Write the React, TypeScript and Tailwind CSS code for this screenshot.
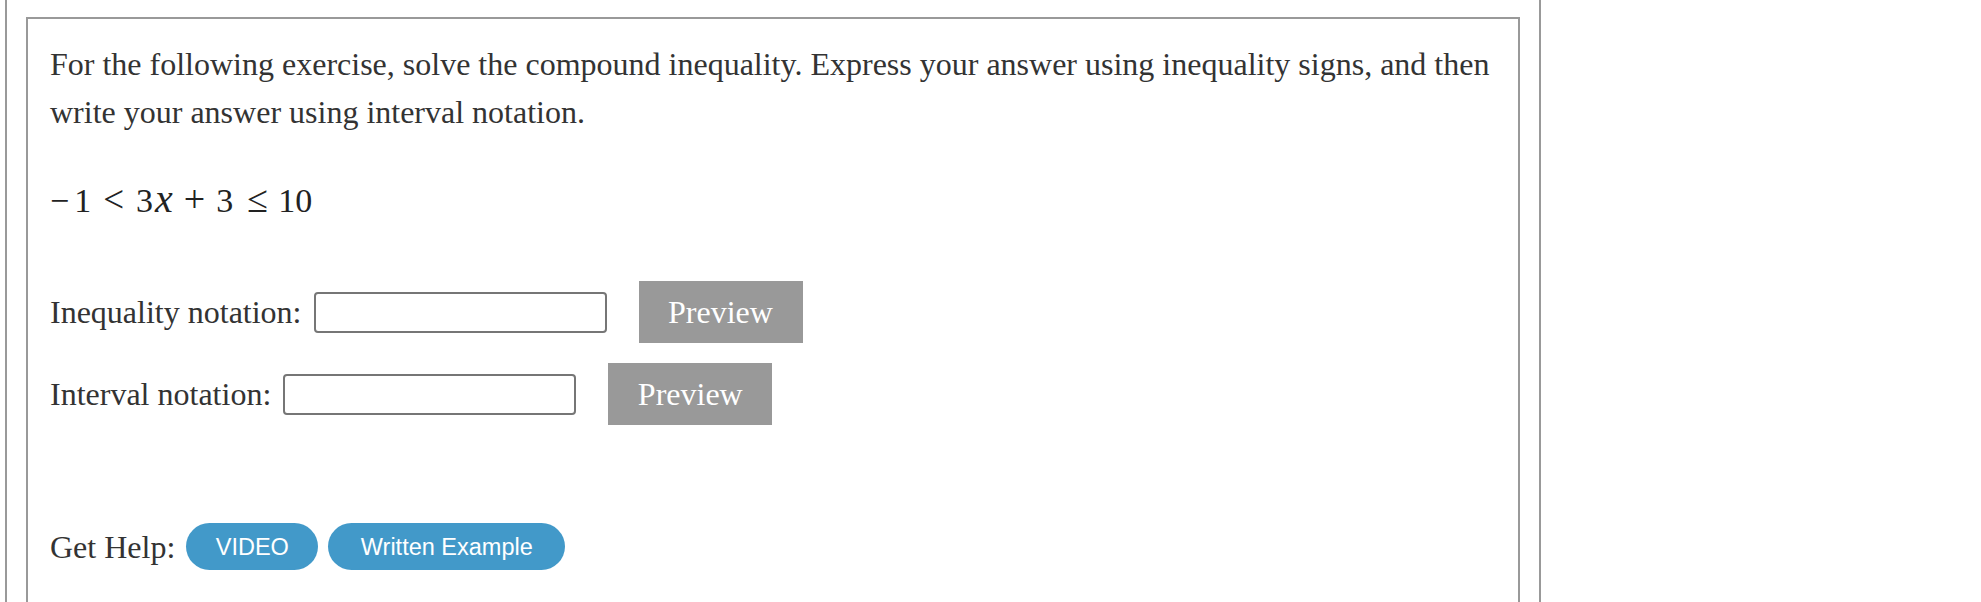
import React from 'react';

const serif = "font-['Liberation_Serif','Times_New_Roman',serif]";
const sans = "font-['Liberation_Sans',Arial,sans-serif]";

const AnswerRow = ({ label, className }: { label: string; className?: string }) => (
  <div className={`flex items-center h-[62px] ${className ?? ''}`}>
    <span>{label}</span>
    <input
      type="text"
      className="ml-[12px] w-[293px] h-[41px] border-2 border-[#767676] rounded-[4px] bg-white outline-none"
    />
    <button className={`ml-[32px] w-[164px] h-[62px] bg-[#999999] text-white text-[32px] ${serif}`}>
      Preview
    </button>
  </div>
);

const HelpButton = ({ children, width }: { children: React.ReactNode; width: string }) => (
  <button className={`h-[47px] ${width} flex items-center justify-center rounded-full bg-[#4299c9] text-white text-[23.5px] ${sans}`}>
    {children}
  </button>
);

export default function App() {
  return (
    <div className={`h-[602px] overflow-hidden bg-white text-[#333] ${serif}`}>
      <div className="ml-[5px] w-[1536px] h-full border-x-2 border-[#999] pt-[17px] px-[19px]">
        <div className="h-[700px] border-2 border-b-0 border-[#999] pt-[21px] pl-[22px] pr-[20px] text-[32px] leading-[48px]">
          <p>
            For the following exercise, solve the compound inequality. Express your answer using inequality signs, and then
            write your answer using interval notation.
          </p>

          {/* -1 < 3x + 3 <= 10 */}
          <div className="mt-[41px] h-[48px] text-[34px] leading-[44px] text-[#222] flex items-baseline">
            <span>−</span>
            <span className="ml-[5px]">1</span>
            <span className="ml-[12px] text-[37px]">&lt;</span>
            <span className="ml-[12px]">3</span>
            <i className="ml-[2px] text-[40px]">x</i>
            <span className="ml-[11px] text-[38px]">+</span>
            <span className="ml-[11px]">3</span>
            <span className="ml-[14px] text-[38px]">≤</span>
            <span className="ml-[10px]">10</span>
          </div>

          <AnswerRow label="Inequality notation:" className="mt-[56px]" />
          <AnswerRow label="Interval notation:" className="mt-[20px]" />

          <div className="mt-[98px] flex items-center gap-[10px] h-[47px]">
            <span className="mr-[1px]">Get Help:</span>
            <HelpButton width="w-[132px]">VIDEO</HelpButton>
            <HelpButton width="w-[237px]">Written Example</HelpButton>
          </div>
        </div>
      </div>
    </div>
  );
}
